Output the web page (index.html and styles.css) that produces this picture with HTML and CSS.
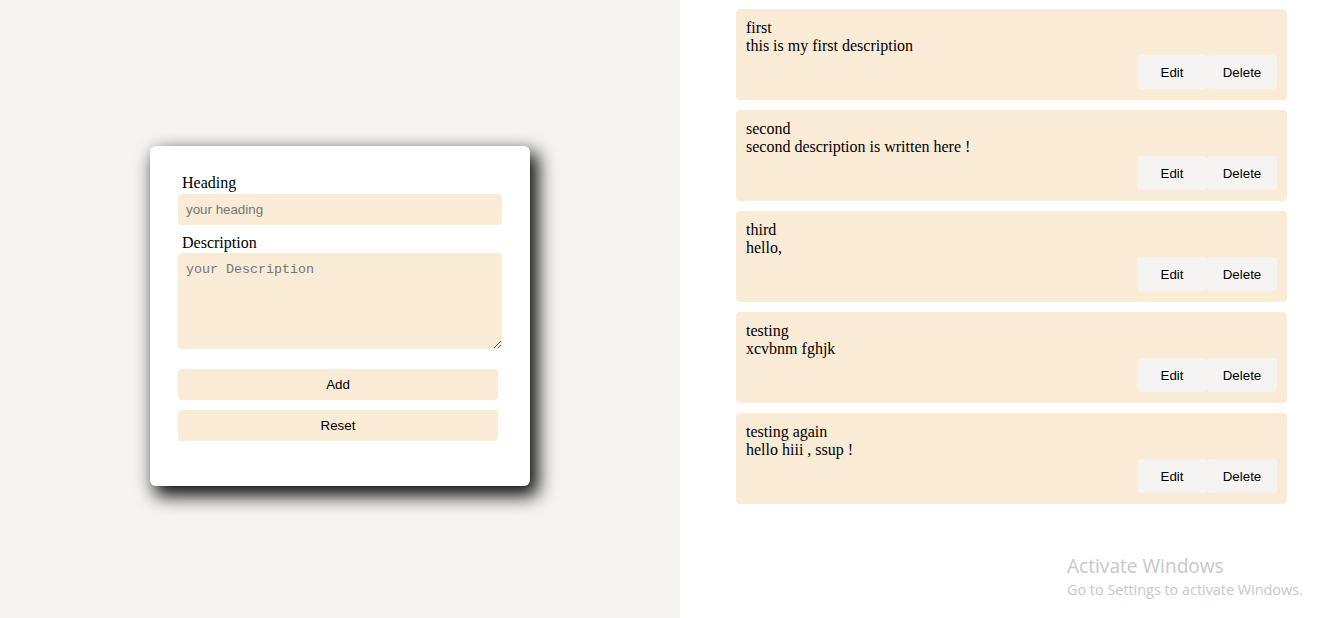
FILE: index.html
```html
<!DOCTYPE html>
<html>
<head>
<meta charset="utf-8">
<title>Notes</title>
<link rel="stylesheet" href="styles.css">
</head>
<body>
<div class="page">
  <div class="left">
    <form class="card">
      <label class="label" for="h">Heading</label>
      <input class="field" id="h" type="text" placeholder="your heading">
      <label class="label" for="d">Description</label>
      <textarea class="area" id="d" placeholder="your Description"></textarea>
      <button type="button" class="btn">Add</button>
      <button type="reset" class="btn">Reset</button>
    </form>
  </div>
  <div class="right">
    <div class="item">
      <div class="text">first<br>this is my first description</div>
      <div class="actions"><button class="act">Edit</button><button class="act">Delete</button></div>
    </div>
    <div class="item">
      <div class="text">second<br>second description is written here !</div>
      <div class="actions"><button class="act">Edit</button><button class="act">Delete</button></div>
    </div>
    <div class="item">
      <div class="text">third<br>hello,</div>
      <div class="actions"><button class="act">Edit</button><button class="act">Delete</button></div>
    </div>
    <div class="item">
      <div class="text">testing<br>xcvbnm fghjk</div>
      <div class="actions"><button class="act">Edit</button><button class="act">Delete</button></div>
    </div>
    <div class="item">
      <div class="text">testing again<br>hello hiii , ssup !</div>
      <div class="actions"><button class="act">Edit</button><button class="act">Delete</button></div>
    </div>
  </div>
</div>
<div class="watermark">
  <div class="wm-title">Activate Windows</div>
  <div class="wm-sub">Go to Settings to activate Windows.</div>
</div>
</body>
</html>
```
FILE: styles.css
```css
html, body {
  margin: 0;
  padding: 0;
  height: 100%;
}
body {
  font-family: "Liberation Serif", "Times New Roman", serif;
  font-size: 16px;
  color: #000;
  background: #fff;
}
.page {
  display: flex;
  height: 618px;
}
.left {
  width: 680px;
  flex: none;
  background: #f5f4f2;
  display: flex;
  justify-content: center;
  align-items: flex-start;
  padding-top: 146px;
  box-sizing: border-box;
}
.card {
  width: 380px;
  height: 340px;
  box-sizing: border-box;
  background: #fff;
  border-radius: 6px;
  padding: 28px 28px 0 28px;
  display: flex;
  flex-direction: column;
  align-items: flex-start;
  box-shadow: 6px 8px 18px 2px rgba(0, 0, 0, 0.95);
}
.label {
  display: block;
  margin-left: 4px;
  margin-bottom: 2px;
  line-height: 18px;
  font-size: 16px;
}
.field {
  width: 324px;
  height: 31px;
  box-sizing: border-box;
  border: none;
  border-radius: 4px;
  background: #faebd7;
  padding: 0 8px;
  margin: 0 0 9px 0;
  font-family: "Liberation Sans", Arial, sans-serif;
  font-size: 13.33px;
  outline: none;
}
.area {
  display: block;
  width: 324px;
  height: 96px;
  box-sizing: border-box;
  border: none;
  border-radius: 4px;
  background: #faebd7;
  padding: 9px 8px 8px 8px;
  margin: -1px 0 20px 0;
  font-family: "Liberation Mono", "Courier New", monospace;
  font-size: 13.33px;
  outline: none;
}
.field::placeholder, .area::placeholder {
  color: #757575;
}
.btn {
  width: 320px;
  height: 31px;
  border: none;
  border-radius: 4px;
  background: #faebd7;
  font-family: "Liberation Sans", Arial, sans-serif;
  font-size: 13.33px;
  color: #000;
  margin: 0 0 10px 0;
  padding: 0;
}
.right {
  flex: 1;
  padding: 9px 48px 0 56px;
  background: #fff;
}
.item {
  background: #faebd7;
  border-radius: 4px;
  padding: 10px 10px 11px 10px;
  margin-bottom: 10px;
}
.text {
  line-height: 18px;
}
.actions {
  display: flex;
  justify-content: flex-end;
}
.act {
  width: 70px;
  height: 34px;
  border: none;
  border-radius: 4px;
  background: #f5f4f2;
  font-family: "Liberation Sans", Arial, sans-serif;
  font-size: 13.33px;
  color: #000;
  padding: 0;
}
.watermark {
  position: absolute;
  left: 1067px;
  top: 554px;
  color: #c8c8c8;
  font-family: "Open Sans", "Noto Sans", sans-serif;
}
.wm-title {
  font-size: 19.1px;
  line-height: 24px;
}
.wm-sub {
  font-size: 14.4px;
  line-height: 20px;
  margin-top: 2px;
}
```
